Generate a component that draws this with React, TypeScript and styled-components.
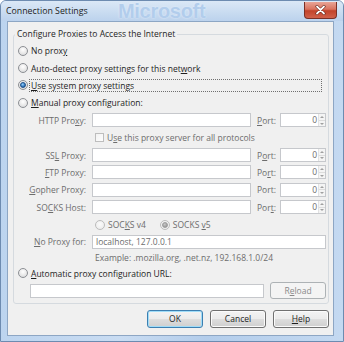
import React from 'react';
import styled, { createGlobalStyle, css } from 'styled-components';

const uiFont = `'Open Sans', 'Noto Sans', sans-serif`;

const GlobalStyle = createGlobalStyle`
  html, body {
    margin: 0;
    padding: 0;
    background: #ffffff;
  }
  body {
    font-family: ${uiFont};
    font-size: 8.5px;
    color: #1e1e1e;
  }
  u {
    text-underline-offset: 1px;
  }
`;

const Window = styled.div`
  position: relative;
  width: 344px;
  height: 342px;
  box-sizing: border-box;
  display: flex;
  flex-direction: column;
  border: 1px solid #6d8bb0;
  border-radius: 6px 6px 0 0;
  background: linear-gradient(90deg, #bcd4ef 0%, #c9dcf2 35%, #b3cdeb 60%, #c4d9f1 100%);
  overflow: hidden;
`;

const TitleBar = styled.div`
  position: relative;
  height: 20px;
  flex: none;
  display: flex;
  align-items: center;
  padding: 0 6px 0 5px;
  background: linear-gradient(180deg, #dbe8f6 0%, #c8dbf0 60%, #bcd2ed 100%);
`;

const Ghost = styled.span`
  position: absolute;
  left: 117px;
  top: 0;
  height: 20px;
  line-height: 20px;
  font-family: 'Liberation Sans', sans-serif;
  font-size: 20px;
  font-weight: bold;
  letter-spacing: -0.3px;
  color: #b2cdec;
  text-shadow: 0 0 2px #e6f0fb;
  pointer-events: none;
`;

const Title = styled.span`
  position: relative;
  font-size: 8.8px;
  color: #1c1c1c;
`;

const CloseButton = styled.div`
  position: relative;
  margin-left: auto;
  margin-top: -2px;
  width: 33px;
  height: 17px;
  box-sizing: border-box;
  border: 1px solid #7a3026;
  border-top: none;
  border-radius: 0 0 4px 4px;
  background: linear-gradient(180deg, #e8a496 0%, #d9735f 45%, #c2432a 55%, #d0614a 100%);
  display: flex;
  align-items: center;
  justify-content: center;
`;

const Client = styled.div`
  flex: 1;
  margin: 0 9px 5px 6px;
  border: 1px solid #8da6c4;
  background: #f0f0f0;
  display: flex;
  flex-direction: column;
  padding: 0 4px 6px 5px;
`;

const Group = styled.fieldset`
  margin: 6px 0 0 0;
  padding: 2px 3px 3px 4px;
  border: 1px solid #d5dadf;
  border-radius: 3px;
  min-width: 0;
`;

const Legend = styled.legend`
  padding: 0 2px;
  margin-left: -3px;
  line-height: 12px;
  color: #1e1e1e;
`;

const OptionRow = styled.div<{ $h?: number }>`
  height: ${(p) => p.$h ?? 17.4}px;
  display: flex;
  align-items: center;
`;

const RadioDot = styled.span<{ $checked?: boolean; $disabled?: boolean }>`
  flex: none;
  width: 10px;
  height: 10px;
  box-sizing: border-box;
  border-radius: 50%;
  border: 1px solid ${(p) => (p.$disabled ? '#bcbcbc' : '#8c8f94')};
  background: ${(p) =>
    p.$disabled
      ? 'radial-gradient(circle at 50% 40%, #fbfbfb, #e9e9e9)'
      : 'radial-gradient(circle at 50% 35%, #ffffff 0%, #e6e6e6 60%, #cfd2d6 100%)'};
  display: flex;
  align-items: center;
  justify-content: center;
  &::after {
    content: '';
    display: ${(p) => (p.$checked ? 'block' : 'none')};
    width: 4px;
    height: 4px;
    border-radius: 50%;
    background: ${(p) =>
      p.$disabled
        ? 'radial-gradient(circle at 40% 35%, #c8c8c8, #8a8a8a)'
        : 'radial-gradient(circle at 40% 35%, #8fd0ff, #1b5ea8 80%)'};
    border: 0.5px solid ${(p) => (p.$disabled ? '#9a9a9a' : '#1a4d87')};
  }
`;

const OptionText = styled.span<{ $focus?: boolean; $disabled?: boolean }>`
  margin-left: 3px;
  line-height: 11px;
  color: ${(p) => (p.$disabled ? '#6d6d6d' : '#1e1e1e')};
  white-space: nowrap;
  ${(p) =>
    p.$focus &&
    css`
      flex: 1;
      margin-left: 1px;
      margin-right: 3px;
      padding-left: 1px;
      border: 1px dotted #6f6f6f;
    `}
`;

const ManualGrid = styled.div`
  display: grid;
  grid-template-columns: 68px 159px 17px 46px;
  grid-template-rows: repeat(8, 17.4px) 14px;
  column-gap: 6px;
  align-items: center;
`;

const FieldLabel = styled.span<{ $left?: boolean }>`
  text-align: ${(p) => (p.$left ? 'left' : 'right')};
  color: #6d6d6d;
  white-space: nowrap;
`;

const TextBox = styled.div<{ $span?: boolean; $w?: number }>`
  height: 14px;
  box-sizing: border-box;
  border: 1px solid #c6c8cc;
  background: #ffffff;
  color: #6d6d6d;
  padding-left: 3px;
  line-height: 12px;
  white-space: nowrap;
  ${(p) => p.$span && 'grid-column: 2 / 5;'}
  ${(p) => p.$w && `width: ${p.$w}px; flex: none;`}
`;

const PortBox = styled.div`
  height: 14px;
  box-sizing: border-box;
  border: 1px solid #c6c8cc;
  background: #ffffff;
  display: flex;
  align-items: stretch;
  justify-content: flex-end;
`;

const PortValue = styled.span`
  color: #6d6d6d;
  line-height: 12px;
  padding-right: 1px;
`;

const Spinner = styled.div`
  width: 6px;
  display: flex;
  flex-direction: column;
  border-left: 1px solid #e2e2e2;
  background: #f4f4f4;
`;

const SpinHalf = styled.div<{ $down?: boolean }>`
  flex: 1;
  display: flex;
  align-items: center;
  justify-content: center;
  ${(p) => p.$down && 'border-top: 1px solid #dcdcdc;'}
  &::after {
    content: '';
    border-left: 2px solid transparent;
    border-right: 2px solid transparent;
    ${(p) =>
      p.$down
        ? 'border-top: 2px solid #a0a0a0;'
        : 'border-bottom: 2px solid #a0a0a0;'}
  }
`;

const SubRow = styled.div`
  grid-column: 2 / 5;
  display: flex;
  align-items: center;
  padding-left: 3px;
`;

const CheckBox = styled.span`
  flex: none;
  width: 9px;
  height: 9px;
  box-sizing: border-box;
  border: 1px solid #bdbdbd;
  background: linear-gradient(135deg, #f2f2f2, #fdfdfd);
`;

const SubText = styled.span<{ $gap?: number }>`
  margin-left: 3px;
  margin-right: ${(p) => p.$gap ?? 0}px;
  color: #6d6d6d;
  white-space: nowrap;
`;

const Example = styled.span`
  grid-column: 2 / 5;
  padding-left: 3px;
  color: #6d6d6d;
  white-space: nowrap;
`;

const UrlRow = styled.div`
  height: 18px;
  display: flex;
  align-items: center;
  gap: 6px;
  padding-left: 12px;
`;

const Button = styled.div<{ $default?: boolean; $disabled?: boolean }>`
  width: 56px;
  height: 18px;
  box-sizing: border-box;
  flex: none;
  border-radius: 3px;
  display: flex;
  align-items: center;
  justify-content: center;
  border: 1px solid #707070;
  background: linear-gradient(180deg, #f3f3f3 0%, #ebebeb 48%, #dddddd 52%, #cfcfcf 100%);
  box-shadow: inset 0 0 0 1px #fbfbfb;
  color: #1e1e1e;
  ${(p) =>
    p.$default &&
    css`
      border-color: #3c7fb1;
      box-shadow: inset 0 0 0 1px #9fdcf8;
    `}
  ${(p) =>
    p.$disabled &&
    css`
      height: 17px;
      border-color: #adb2b5;
      background: #f4f4f4;
      box-shadow: none;
      color: #8a8a8a;
    `}
`;

const ButtonBar = styled.div`
  margin-top: 6px;
  display: flex;
  justify-content: flex-end;
  gap: 7px;
`;

const lowerRows: { label: React.ReactNode; port: React.ReactNode }[] = [
  { label: <>SS<u>L</u> Proxy:</>, port: <>P<u>o</u>rt:</> },
  { label: <><u>F</u>TP Proxy:</>, port: <>Po<u>r</u>t:</> },
  { label: <><u>G</u>opher Proxy:</>, port: <>Port:</> },
  { label: <>SO<u>C</u>KS Host:</>, port: <>Por<u>t</u>:</> },
];

const Port = () => (
  <PortBox>
    <PortValue>0</PortValue>
    <Spinner>
      <SpinHalf />
      <SpinHalf $down />
    </Spinner>
  </PortBox>
);

const ProxyRow = ({ label, port }: { label: React.ReactNode; port: React.ReactNode }) => (
  <>
    <FieldLabel>{label}</FieldLabel>
    <TextBox />
    <FieldLabel $left>{port}</FieldLabel>
    <Port />
  </>
);

const App = () => {
  return (
    <>
      <GlobalStyle />
      <Window>
        <TitleBar>
          <Ghost>Microsoft</Ghost>
          <Title>Connection Settings</Title>
          <CloseButton>
            <svg width="11" height="10" viewBox="0 0 11 10">
              <path
                d="M2 1.5 L9 8.5 M9 1.5 L2 8.5"
                stroke="#5a1b12"
                strokeWidth="3"
                strokeLinecap="round"
              />
              <path
                d="M2 1.5 L9 8.5 M9 1.5 L2 8.5"
                stroke="#ffffff"
                strokeWidth="1.8"
                strokeLinecap="round"
              />
            </svg>
          </CloseButton>
        </TitleBar>
        <Client>
          <Group>
            <Legend>Configure Proxies to Access the Internet</Legend>
            <OptionRow>
              <RadioDot />
              <OptionText>
                No prox<u>y</u>
              </OptionText>
            </OptionRow>
            <OptionRow>
              <RadioDot />
              <OptionText>
                Auto-detect proxy settings for this net<u>w</u>ork
              </OptionText>
            </OptionRow>
            <OptionRow>
              <RadioDot $checked />
              <OptionText $focus>
                <u>U</u>se system proxy settings
              </OptionText>
            </OptionRow>
            <OptionRow>
              <RadioDot />
              <OptionText>
                <u>M</u>anual proxy configuration:
              </OptionText>
            </OptionRow>
            <ManualGrid>
              <ProxyRow
                label={<>HTTP Pro<u>x</u>y:</>}
                port={<><u>P</u>ort:</>}
              />
              <SubRow>
                <CheckBox />
                <SubText>
                  U<u>s</u>e this proxy server for all protocols
                </SubText>
              </SubRow>
              {lowerRows.map((r, i) => (
                <ProxyRow key={i} label={r.label} port={r.port} />
              ))}
              <SubRow>
                <RadioDot $disabled />
                <SubText $gap={14}>
                  SOC<u>K</u>S v4
                </SubText>
                <RadioDot $disabled $checked />
                <SubText>
                  SOCKS <u>v</u>5
                </SubText>
              </SubRow>
              <FieldLabel>
                <u>N</u>o Proxy for:
              </FieldLabel>
              <TextBox $span>localhost, 127.0.0.1</TextBox>
              <Example>Example: .mozilla.org, .net.nz, 192.168.1.0/24</Example>
            </ManualGrid>
            <OptionRow $h={17}>
              <RadioDot />
              <OptionText>
                <u>A</u>utomatic proxy configuration URL:
              </OptionText>
            </OptionRow>
            <UrlRow>
              <TextBox $w={234} />
              <Button $disabled>
                R<u>e</u>load
              </Button>
            </UrlRow>
          </Group>
          <ButtonBar>
            <Button $default>OK</Button>
            <Button>Cancel</Button>
            <Button>
              <u>H</u>elp
            </Button>
          </ButtonBar>
        </Client>
      </Window>
    </>
  );
};

export default App;
